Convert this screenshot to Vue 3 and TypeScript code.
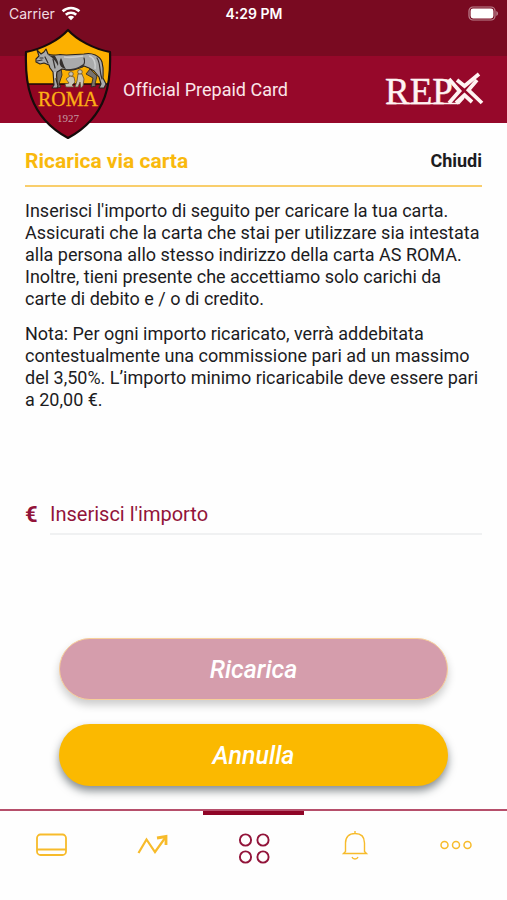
<script setup lang="ts">
import { ref } from 'vue'

type TabId = 'card' | 'activity' | 'services' | 'alerts' | 'more'

const tabs: { id: TabId; label: string }[] = [
  { id: 'card', label: 'Carta' },
  { id: 'activity', label: 'Movimenti' },
  { id: 'services', label: 'Servizi' },
  { id: 'alerts', label: 'Notifiche' },
  { id: 'more', label: 'Altro' },
]

const activeTab = ref<TabId>('services')
const amount = ref('')
</script>

<template>
  <div class="screen">
    <div class="status">
      <div class="carrier">
        <span>Carrier</span>
        <svg width="20" height="15" viewBox="0 0 20 15" aria-hidden="true">
          <g fill="none" stroke="#fff" stroke-width="2.6">
            <path d="M1.6 5.3C6.4.9 13.6.9 18.4 5.3" />
            <path d="M4.8 8.7C7.8 6 12.2 6 15.2 8.7" />
          </g>
          <path d="M10 14.2 6.8 11C8.6 9.4 11.4 9.4 13.2 11Z" fill="#fff" />
        </svg>
      </div>
      <span class="time">4:29 PM</span>
      <div class="power">
        <svg width="31" height="15" viewBox="0 0 31 15" aria-hidden="true">
          <rect x="1" y="1" width="26" height="13" rx="4" fill="none" stroke="#bd8490" stroke-width="1.2" />
          <rect x="2.6" y="2.6" width="22.8" height="9.8" rx="2.4" fill="#fff" />
          <path d="M28.3 5v5c2.2-.8 2.2-4.2 0-5Z" fill="#bd8490" />
        </svg>
      </div>
    </div>

    <header class="brand">
      <svg class="crest" width="88" height="112" viewBox="0 0 88 112" role="img" aria-label="AS Roma">
        <defs>
          <clipPath id="shield">
            <path d="M44 2C35 12 18 21 2 24C1 51 3 88 44 110C85 88 87 51 86 24C70 21 53 12 44 2Z" />
          </clipPath>
        </defs>
        <g clip-path="url(#shield)">
          <rect width="88" height="56" fill="#fcb000" />
          <rect y="56" width="88" height="56" fill="#920522" />
          <path d="M0 56H88" stroke="#190a08" stroke-width="1.6" />
        </g>
        <path d="M44 2C35 12 18 21 2 24C1 51 3 88 44 110C85 88 87 51 86 24C70 21 53 12 44 2Z" fill="none" stroke="#160b0b" stroke-width="2.2" stroke-linejoin="round" />
        <!-- far-side legs -->
        <path d="M37 40 38 47 35 56 37 59 33 60 33 50 32 41ZM66 41 73 48 71 56 72 58 67 59 69 50 62 46Z" fill="#77736d" stroke="#29221c" stroke-width="0.8" />
        <!-- body, head, tail -->
        <path d="M12 31 15 28 13 22 17 26 20 24 22 21 24 26C28 28 32 27 36 26.5C44 28 52 26 60 26C68 24 76 28 78 34C80 41 79 46 79 50L82 56 80 60 75 60 77 56 75 49 70 43 65 40 60 38C53 42 45 43 38 41L33 44 32 51 34 58 33 60 28 60 30 57 29 44 26 40 25 37 20 35 16 36 12 34Z" fill="#aaabac" stroke="#29221c" stroke-width="1.1" stroke-linejoin="round" />
        <path d="M24 27C30 30 32 34 34 38C35 35 33 31 31 28ZM37 30C34 35 36 40 42 41C39 37 39 33 37 30Z" fill="#35302d" />
        <path d="M16 30H19M21 29 24 35M13 33 18 32M29 31 31 40M58 39C61 36 61 33 60 30M42 42C49 42 55 40 59 37M73 30C77 36 75 43 78 51" fill="none" stroke="#353130" stroke-width="1.2" stroke-linecap="round" />
        <path d="M40 29C47 30 54 29 59 28M65 28C70 29 72 35 71 41M31 44V50" fill="none" stroke="#cccdce" stroke-width="1.6" />
        <!-- twins -->
        <g fill="#c9c4b5" stroke="#625036" stroke-width="0.8">
          <circle cx="47" cy="46" r="2.3" />
          <path d="M46 48 50 49 51 54 48 57 50 59 42 59 41 56 45 55 42 51Z" />
          <circle cx="56" cy="44" r="2.3" />
          <path d="M54 46 58 46 60 51 59 58 57 60 56 54 54 59 51 59 53 53Z" />
        </g>
        <g text-anchor="middle" font-family="Liberation Serif, serif">
          <text x="44" y="78" font-size="20" fill="#fdb015" stroke="#fdb015" stroke-width="0.3">ROMA</text>
          <text x="44" y="94" font-size="11" fill="#c39ba2">1927</text>
        </g>
      </svg>
      <span class="tagline">Official Prepaid Card</span>
      <svg class="repx" width="99" height="44" viewBox="0 0 99 44" role="img" aria-label="REPX">
        <text x="0" y="36" font-family="Liberation Serif, serif" font-size="37" fill="#fff3f2" stroke="#fff3f2" stroke-width="0.4">REP</text>
        <path d="M2 35.5H74L79 30" fill="none" stroke="#fff3f2" stroke-width="1.5" />
        <g fill="none" stroke="#fff3f2" stroke-width="3.8">
          <path d="M64 11 74.5 23 64 35" />
          <path d="M72 12 79.5 18 94 6" />
          <path d="M71 35 79.5 27 87 34" />
          <path d="M92 12 83.5 22 97 35" />
        </g>
      </svg>
    </header>

    <main class="content">
      <div class="heading">
        <h1>Ricarica via carta</h1>
        <button type="button" class="close">Chiudi</button>
      </div>

      <div class="copy">
        <p>
          Inserisci l'importo di seguito per caricare la tua carta.<br />
          Assicurati che la carta che stai per utilizzare sia intestata<br />
          alla persona allo stesso indirizzo della carta AS ROMA.<br />
          Inoltre, tieni presente che accettiamo solo carichi da<br />
          carte di debito e / o di credito.
        </p>
        <p>
          Nota: Per ogni importo ricaricato, verrà addebitata<br />
          contestualmente una commissione pari ad un massimo<br />
          del 3,50%. L’importo minimo ricaricabile deve essere pari<br />
          a 20,00 €.
        </p>
      </div>

      <form class="topup" @submit.prevent>
        <div class="field">
          <label for="amount">€</label>
          <input id="amount" v-model="amount" type="text" inputmode="decimal" placeholder="Inserisci l'importo" />
        </div>
        <div class="actions">
          <button type="submit" class="pill submit" :disabled="!amount">Ricarica</button>
          <button type="button" class="pill cancel" @click="amount = ''">Annulla</button>
        </div>
      </form>
    </main>

    <nav class="tabs">
      <button
        v-for="tab in tabs"
        :key="tab.id"
        type="button"
        class="tab"
        :class="{ active: tab.id === activeTab }"
        :aria-label="tab.label"
        @click="activeTab = tab.id"
      >
        <svg width="36" height="36" viewBox="0 0 36 36" fill="none" stroke="currentColor" aria-hidden="true">
          <g v-if="tab.id === 'card'">
            <rect x="4" y="3.5" width="29" height="20.5" rx="3.5" stroke-width="1.8" />
            <path d="M4 18.5H33" stroke-width="2" />
          </g>
          <g v-else-if="tab.id === 'activity'" stroke-width="2.2">
            <path d="M4.5 22 12.5 8.5 21 21 31 7" />
            <path d="M23 7 32 5.5V14" stroke-width="2.8" />
          </g>
          <g v-else-if="tab.id === 'services'" stroke-width="1.9">
            <circle cx="9.5" cy="9" r="5.6" />
            <circle cx="27" cy="9" r="5.6" />
            <circle cx="9.5" cy="26" r="5.6" />
            <circle cx="27" cy="26" r="5.6" />
          </g>
          <g v-else-if="tab.id === 'alerts'" stroke-width="1.4">
            <path d="M18 0V3M8.5 20.5V12C8.5 6 12 2.5 18 2.5S27.5 6 27.5 12V20.5L29.5 22.5H6.5ZM15 26C16 28.7 20 28.7 21 26" />
          </g>
          <g v-else stroke-width="1.5">
            <circle cx="6.5" cy="14" r="3.5" />
            <circle cx="18" cy="14" r="3.5" />
            <circle cx="29.5" cy="14" r="3.5" />
          </g>
        </svg>
      </button>
    </nav>
  </div>
</template>

<style>
body {
  margin: 0;
  background: #fefefe;
}
</style>

<style scoped>
* {
  box-sizing: border-box;
}

.screen {
  min-height: 100vh;
  display: flex;
  flex-direction: column;
  background: #fefefe;
  color: #1c1c1e;
  font-family: Roboto, 'Liberation Sans', sans-serif;
  font-variant-ligatures: none;
}

button,
input {
  font-family: inherit;
  border: 0;
  padding: 0;
  margin: 0;
  background: none;
}

button {
  cursor: pointer;
}

.status {
  height: 56px;
  padding: 6px 8px 0 9px;
  display: grid;
  grid-template-columns: 1fr auto 1fr;
  align-items: start;
  background: #790a21;
  color: #fff;
  font-family: Inter, 'Liberation Sans', sans-serif;
  font-size: 14px;
  line-height: 16px;
}

.carrier {
  display: flex;
  gap: 6px;
  color: #f1dce0;
}

.time {
  font-weight: 600;
}

.power {
  display: flex;
  justify-content: flex-end;
}

.brand {
  height: 67px;
  padding: 0 23px 0 24px;
  display: flex;
  align-items: center;
  background: #96082a;
}

.crest {
  flex: none;
  margin-top: -12px;
}

.tagline {
  flex: 1;
  margin-left: 11px;
  color: #fbe6e9;
  font-size: 18px;
  line-height: 20px;
}

.repx {
  flex: none;
}

.content {
  flex: 1;
  display: flex;
  flex-direction: column;
  padding: 26px 25px 23px;
}

.heading {
  display: flex;
  align-items: center;
  justify-content: space-between;
  padding-bottom: 12px;
  border-bottom: 2px solid #f9ce6c;
}

h1 {
  margin: 0;
  color: #f9b90d;
  font-size: 21px;
  font-weight: 700;
  line-height: 24px;
}

.close {
  color: #1c1c1e;
  font-size: 18px;
  font-weight: 700;
  line-height: 24px;
}

.copy {
  margin-top: 13px;
  display: flex;
  flex-direction: column;
  gap: 13px;
  font-size: 18px;
  line-height: 22px;
}

.copy p {
  margin: 0;
}

.topup {
  flex: 1;
  display: flex;
  flex-direction: column;
  justify-content: space-between;
  margin-top: 84px;
}

.field {
  display: flex;
  color: #92143a;
  line-height: 40px;
}

.field label {
  width: 25px;
  font-size: 22px;
  font-weight: 700;
}

.field input {
  flex: 1;
  min-width: 0;
  height: 40px;
  border-bottom: 2px solid #f0f1f2;
  color: inherit;
  font-size: 20px;
  outline: 0;
}

.field input::placeholder {
  color: inherit;
  opacity: 1;
}

.actions {
  display: flex;
  flex-direction: column;
  gap: 24px;
  padding: 0 34px;
}

.pill {
  height: 62px;
  padding-top: 2px;
  border-radius: 31px;
  color: #fff;
  font-size: 25px;
  font-style: italic;
  font-weight: 500;
  line-height: 30px;
}

.submit {
  border: 1px solid #f7cf9a;
  background: #d59dac;
  box-shadow: 0 5px 9px rgba(0, 0, 0, 0.2);
}

.cancel {
  background: #fbb900;
  box-shadow: 0 5px 8px rgba(20, 32, 38, 0.5);
}

.tabs {
  height: 91px;
  display: flex;
  border-top: 2px solid #b64f6b;
}

.tab {
  flex: 1;
  display: flex;
  justify-content: center;
  padding-top: 20px;
  color: #f7bb2b;
}

.tab.active {
  padding-top: 16px;
  border-top: 4px solid #8f0527;
  color: #92143a;
}
</style>
